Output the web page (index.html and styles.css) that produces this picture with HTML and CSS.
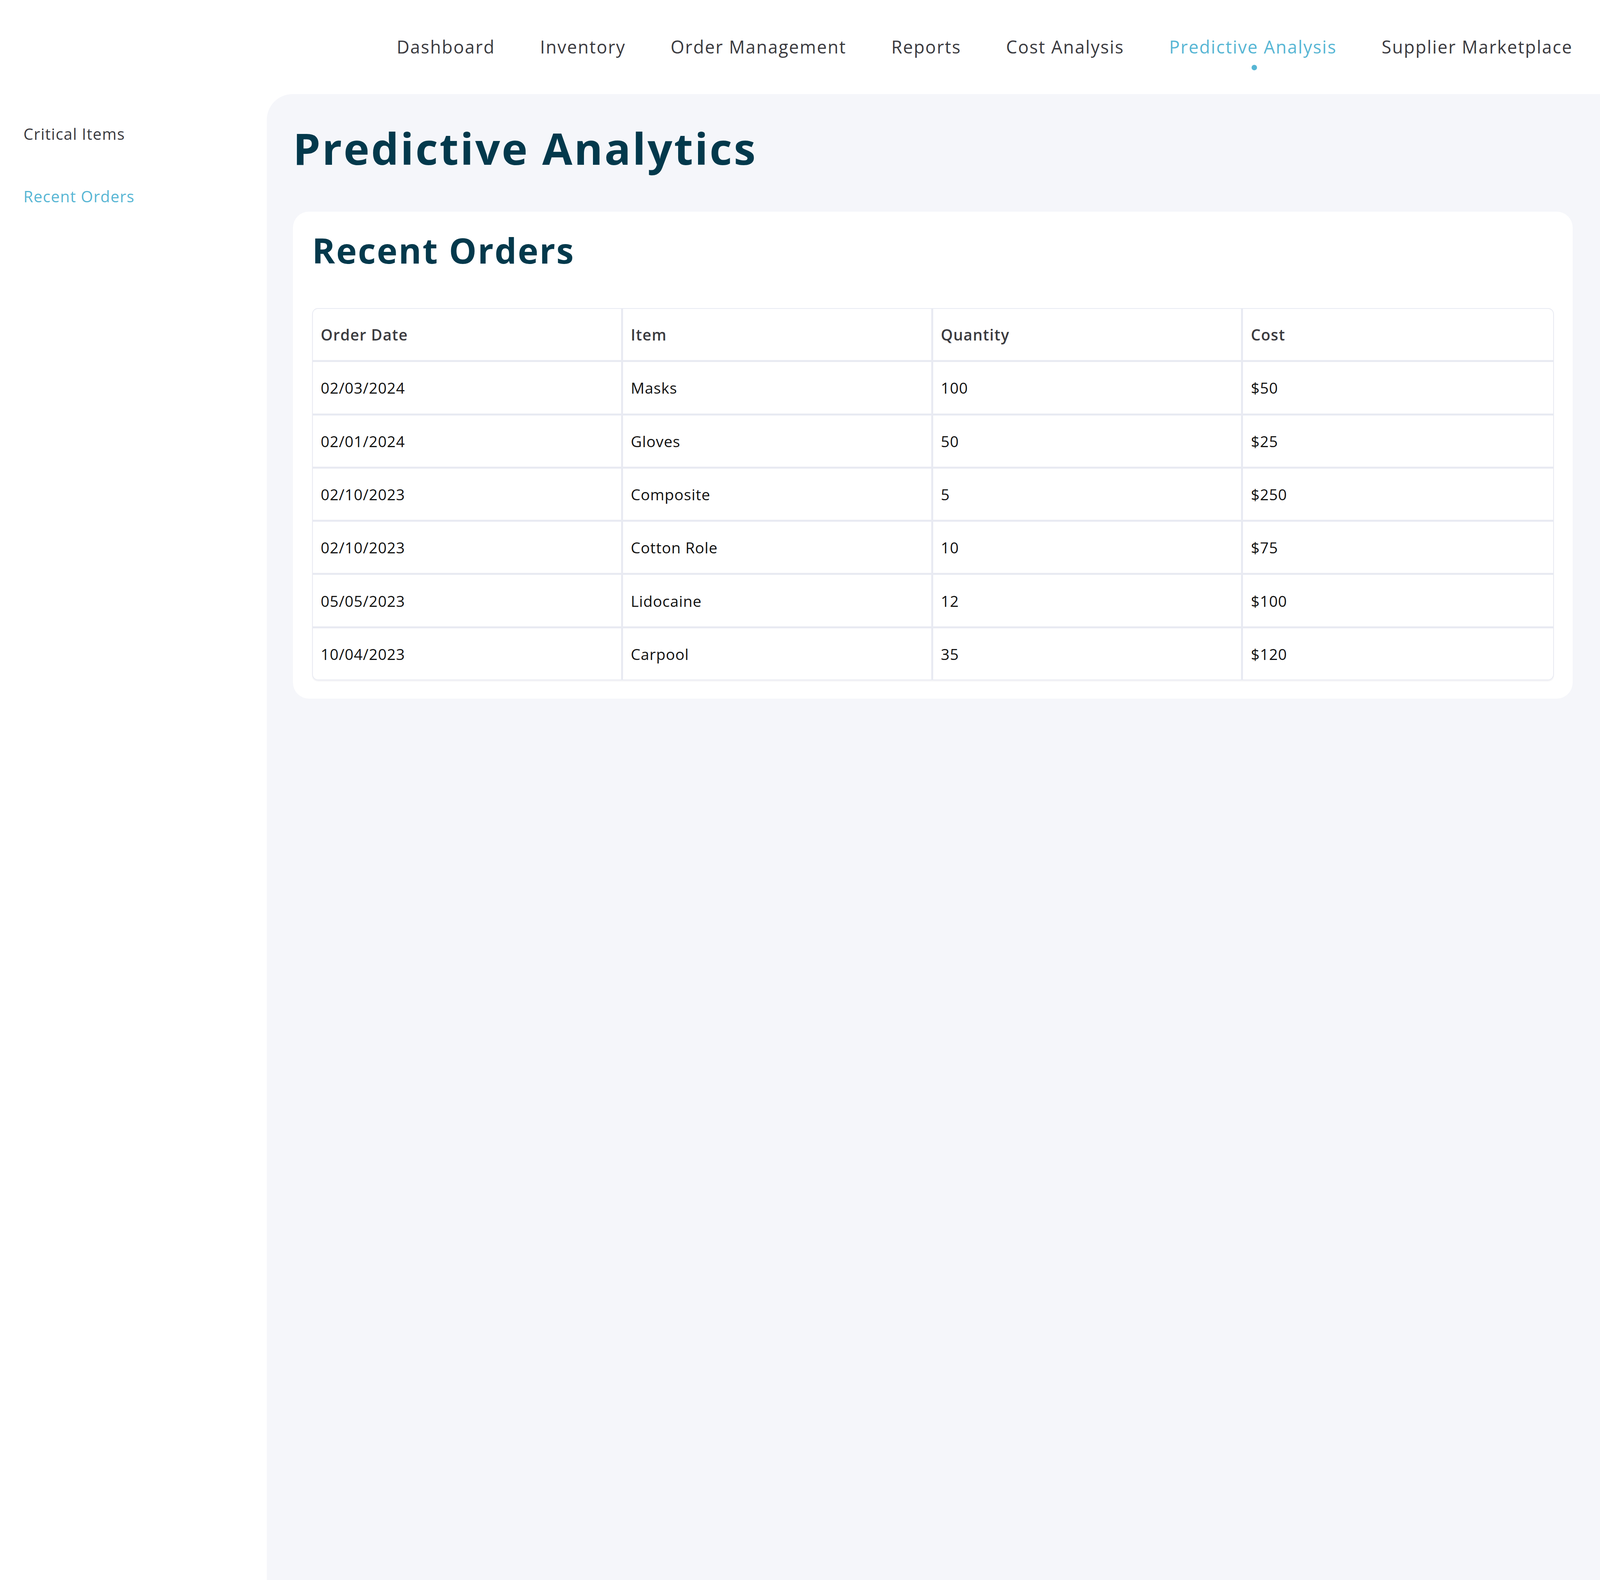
FILE: index.html
```html
<!DOCTYPE html>
<html lang="en">
<head>
<meta charset="utf-8">
<title>Predictive Analytics</title>
<link rel="stylesheet" href="styles.css">
</head>
<body>
<header class="topbar">
  <nav class="topnav">
    <a class="topnav-link" href="#">Dashboard</a>
    <a class="topnav-link" href="#">Inventory</a>
    <a class="topnav-link" href="#">Order Management</a>
    <a class="topnav-link" href="#">Reports</a>
    <a class="topnav-link" href="#">Cost Analysis</a>
    <a class="topnav-link is-active" href="#">Predictive Analysis</a>
    <a class="topnav-link" href="#">Supplier Marketplace</a>
  </nav>
</header>
<div class="layout">
  <aside class="sidebar">
    <a class="side-link" href="#">Critical Items</a>
    <a class="side-link is-active" href="#">Recent Orders</a>
  </aside>
  <main class="panel">
    <h1 class="page-title">Predictive Analytics</h1>
    <section class="card">
      <h2 class="card-title">Recent Orders</h2>
      <div class="table-wrap">
        <table class="orders">
          <thead>
            <tr><th>Order Date</th><th>Item</th><th>Quantity</th><th>Cost</th></tr>
          </thead>
          <tbody>
            <tr><td>02/03/2024</td><td>Masks</td><td>100</td><td>$50</td></tr>
            <tr><td>02/01/2024</td><td>Gloves</td><td>50</td><td>$25</td></tr>
            <tr><td>02/10/2023</td><td>Composite</td><td>5</td><td>$250</td></tr>
            <tr><td>02/10/2023</td><td>Cotton Role</td><td>10</td><td>$75</td></tr>
            <tr><td>05/05/2023</td><td>Lidocaine</td><td>12</td><td>$100</td></tr>
            <tr><td>10/04/2023</td><td>Carpool</td><td>35</td><td>$120</td></tr>
          </tbody>
        </table>
      </div>
    </section>
  </main>
</div>
</body>
</html>
```

FILE: styles.css
```css
html, body {
  margin: 0;
  padding: 0;
  background: #ffffff;
}
body {
  font-family: "Open Sans", "Liberation Sans", sans-serif;
  min-height: 100vh;
  display: flex;
  flex-direction: column;
  overflow: hidden;
}
a { text-decoration: none; }

.topbar {
  height: 241px;
  flex: 0 0 auto;
  display: flex;
  justify-content: flex-end;
  align-items: flex-start;
  padding-right: 70px;
  box-sizing: border-box;
}
.topnav {
  display: flex;
  gap: 115px;
  padding-top: 86px;
}
.topnav-link {
  position: relative;
  font-size: 45px;
  line-height: 67px;
  color: #3a3a3f;
  letter-spacing: 2.2px;
  white-space: nowrap;
}
.topnav-link.is-active { color: #57b6d4; }
.topnav-link.is-active::after {
  content: "";
  position: absolute;
  left: 50%;
  top: 80px;
  width: 14px;
  height: 14px;
  margin-left: -4px;
  border-radius: 50%;
  background: #57b6d4;
}

.layout {
  flex: 1 1 auto;
  display: flex;
  min-height: 0;
}
.sidebar {
  width: 683px;
  flex: 0 0 683px;
  display: flex;
  flex-direction: column;
  align-items: flex-start;
  gap: 100px;
  padding: 72px 0 0 60px;
  box-sizing: border-box;
}
.side-link {
  font-size: 40px;
  line-height: 60px;
  color: #3a3a3f;
  letter-spacing: 1.3px;
}
.side-link.is-active { color: #57b6d4; }

.panel {
  flex: 1 1 auto;
  background: #f5f6fa;
  border-top-left-radius: 66px;
  padding: 71px 70px 0 67px;
  box-sizing: border-box;
}
.page-title {
  margin: 0 0 96px 0;
  font-size: 112px;
  line-height: 134px;
  font-weight: 700;
  color: #03394c;
  letter-spacing: 4.2px;
}
.card {
  background: #ffffff;
  border-radius: 41px;
  padding: 46px 48px 47px 49px;
}
.card-title {
  margin: 0 0 95px 0;
  font-size: 89px;
  line-height: 106px;
  font-weight: 700;
  color: #03394c;
  letter-spacing: 2.9px;
}
.table-wrap {
  border: 2.75px solid #e8eaf2;
  border-radius: 15px;
  overflow: hidden;
  box-shadow: 0 3px 2px rgba(30, 40, 80, 0.05);
}
.orders {
  width: 100%;
  border-collapse: separate;
  border-spacing: 0;
  table-layout: fixed;
}
.orders th,
.orders td {
  height: 131.3px;
  padding: 0 20px;
  text-align: left;
  vertical-align: middle;
  font-size: 39px;
  border-right: 5.5px solid #e8eaf2;
  border-bottom: 5.5px solid #e8eaf2;
  white-space: nowrap;
}
.orders th:last-child,
.orders td:last-child { border-right: 0; }
.orders tbody tr:last-child td { border-bottom: 0; }
.orders th {
  font-weight: 600;
  color: #3b3b40;
  letter-spacing: 1.3px;
}
.orders td {
  font-weight: 400;
  color: #111111;
  letter-spacing: 0.9px;
}
```
